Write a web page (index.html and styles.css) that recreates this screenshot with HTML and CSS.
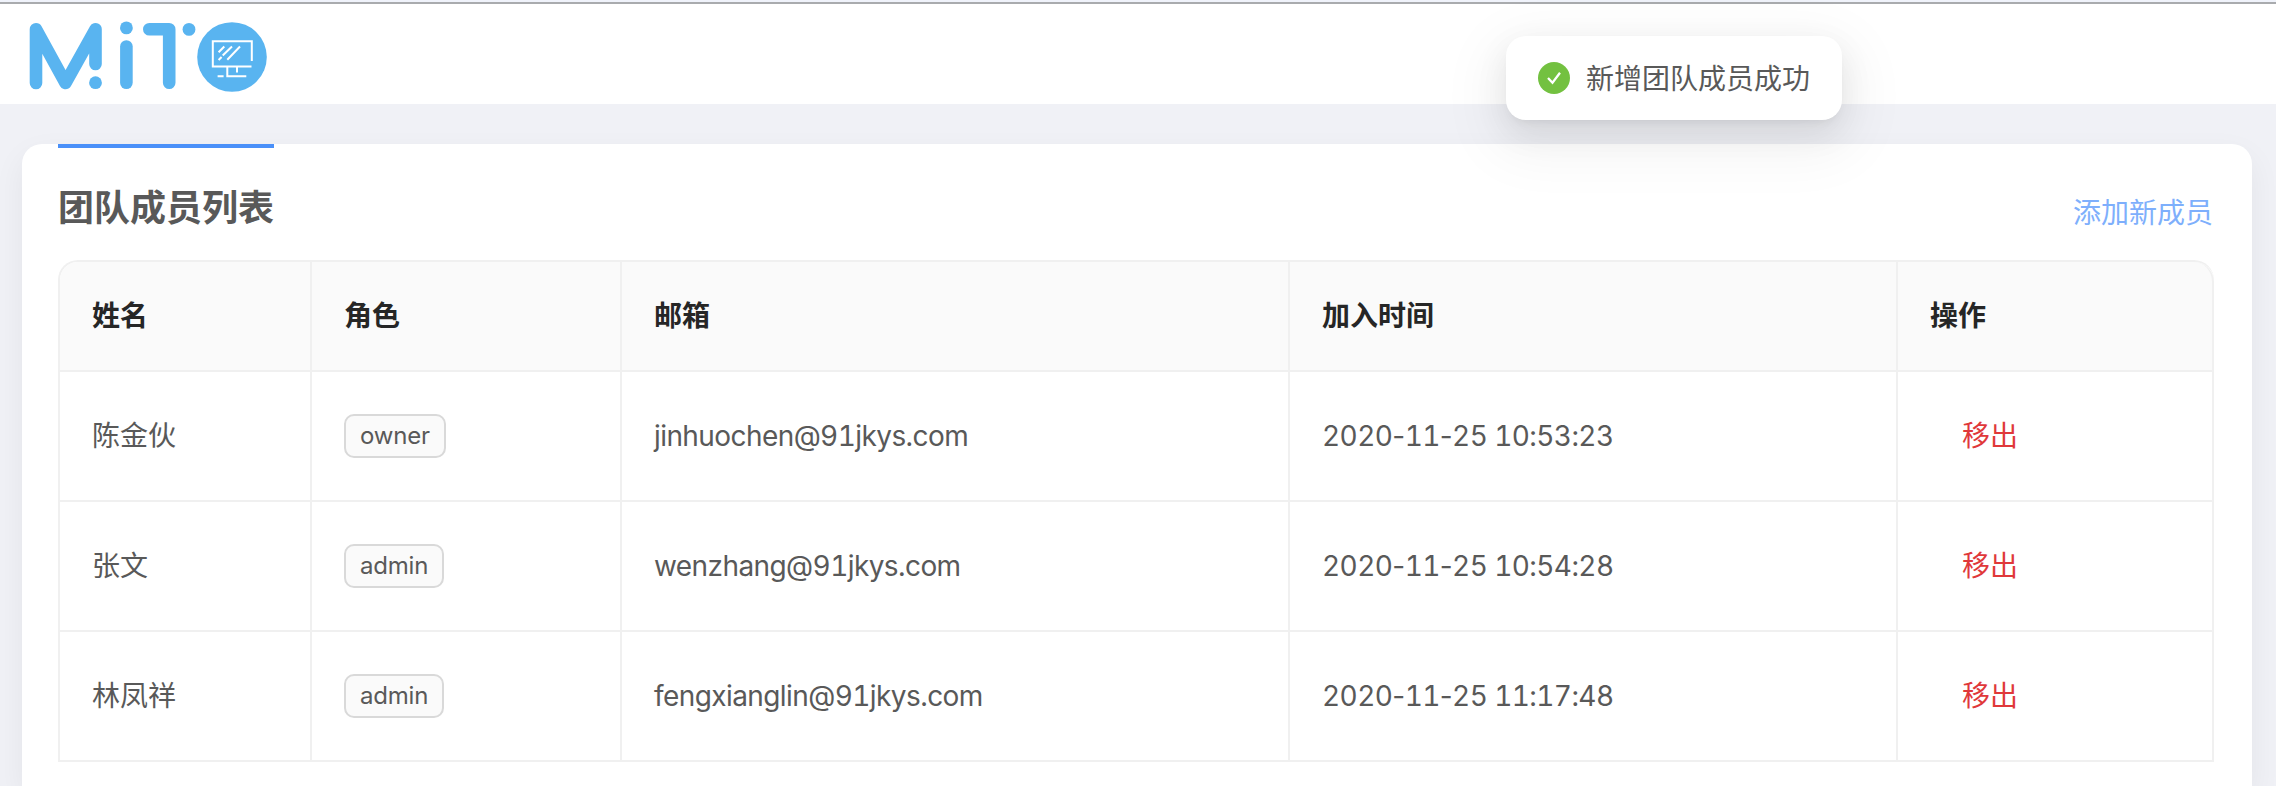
FILE: index.html
```html
<!DOCTYPE html>
<html lang="zh-CN">
<head>
<meta charset="utf-8">
<title>团队成员列表</title>
<link rel="stylesheet" href="styles.css">
</head>
<body>
<header class="header">
  <svg class="logo" width="280" height="100" viewBox="0 4 280 100">
    <g fill="none" stroke="#59b4f0" stroke-width="12.6" stroke-linecap="round" stroke-linejoin="round">
      <path d="M36 83V29.3L65.5 83L95.5 29.3V64"/>
      <path d="M126.4 46.5V82.7"/>
      <path d="M149.3 29.3H169.2V82.7"/>
    </g>
    <g fill="#59b4f0">
      <circle cx="95.5" cy="82.7" r="6.4"/>
      <circle cx="126.4" cy="27.9" r="6.4"/>
      <circle cx="189" cy="29.4" r="6.4"/>
      <circle cx="232" cy="57" r="34.8"/>
    </g>
    <g fill="none" stroke="#fff" stroke-width="2">
      <path d="M251.8 61V41.2H212.8V66.5H251.5"/>
      <path d="M227.3 67V76.2H246.3M237 67V72.5M217.6 76.2H223.6"/>
      <path d="M218.6 52.3L224.3 46.5M222.7 55.5L232 46.5M227.3 59.7L240 46.5M218.6 60L221.6 57"/>
    </g>
  </svg>
</header>
<main class="card">
  <div class="card-head">
    <h1 class="title">团队成员列表</h1>
    <a class="add">添加新成员</a>
  </div>
  <table class="members">
    <colgroup><col class="c-name"><col class="c-role"><col class="c-mail"><col class="c-time"><col class="c-act"></colgroup>
    <thead>
      <tr><th>姓名</th><th>角色</th><th>邮箱</th><th>加入时间</th><th>操作</th></tr>
    </thead>
    <tbody>
      <tr><td>陈金伙</td><td><span class="tag">owner</span></td><td class="latin">jinhuochen@91jkys.com</td><td class="latin">2020<span class="dash">-</span>11<span class="dash">-</span>25 10:53:23</td><td><a class="remove">移出</a></td></tr>
      <tr><td>张文</td><td><span class="tag">admin</span></td><td class="latin">wenzhang@91jkys.com</td><td class="latin">2020<span class="dash">-</span>11<span class="dash">-</span>25 10:54:28</td><td><a class="remove">移出</a></td></tr>
      <tr><td>林凤祥</td><td><span class="tag">admin</span></td><td class="latin">fengxianglin@91jkys.com</td><td class="latin">2020<span class="dash">-</span>11<span class="dash">-</span>25 11:17:48</td><td><a class="remove">移出</a></td></tr>
    </tbody>
  </table>
</main>
<div class="toast">
  <svg width="32" height="32" viewBox="0 0 32 32"><circle cx="16" cy="16" r="16" fill="#73c140"/><path d="M10 16L14.5 20.8L22 10.8" fill="none" stroke="#fff" stroke-width="2.3"/></svg>
  <span class="toast-text">新增团队成员成功</span>
</div>
</body>
</html>
```

FILE: styles.css
```css
* { box-sizing: border-box; }
body {
  margin: 0;
  height: 786px;
  display: flex;
  flex-direction: column;
  overflow: hidden;
  background: #f0f1f6;
  border-top: 2px solid #f0f3fb;
  font: 28px/44px Inter, "Noto Sans CJK SC", sans-serif;
  font-feature-settings: "tnum";
  color: #595959;
}
.header {
  flex: none;
  height: 102px;
  background: #fff;
  border-top: 2px solid #a9abae;
}
.logo { display: block; }
.card {
  flex: 1;
  min-height: 0;
  margin: 40px 24px 0 22px;
  padding: 0 38px 0 36px;
  background: #fff;
  border-radius: 20px 20px 0 0;
  box-shadow: 0 12px 32px rgba(0, 0, 30, .06);
}
.card-head {
  display: flex;
  justify-content: space-between;
  height: 116px;
}
.title {
  margin: 0;
  padding-top: 36px;
  border-top: 4px solid #4a90f9;
  height: 92px;
  font-size: 36px;
  line-height: 48px;
  font-weight: 700;
}
.add {
  padding: 47px 1px 0 0;
  color: #7eaffc;
}
.members {
  width: 2156px;
  table-layout: fixed;
  border-collapse: separate;
  border-spacing: 0;
  border: 2px solid #f0f0f0;
  border-right: 0;
  border-bottom: 0;
  border-radius: 20px 20px 0 0;
}
.c-name { width: 252px; }
.c-role { width: 310px; }
.c-mail { width: 668px; }
.c-time { width: 608px; }
.c-act { width: 316px; }
th, td {
  padding: 0 32px;
  text-align: left;
  border-right: 2px solid #f0f0f0;
  border-bottom: 2px solid #f0f0f0;
}
th {
  height: 110px;
  background: #fafafa;
  color: #262626;
  font-weight: 700;
}
th:first-child { border-top-left-radius: 18px; }
th:last-child { border-top-right-radius: 20px; }
td { height: 130px; }
.latin { letter-spacing: -.58px; }
.dash { font-feature-settings: "tnum" 0; }
.tag {
  display: block;
  width: fit-content;
  height: 44px;
  padding: 0 14px;
  border: 2px solid #d9d9d9;
  border-radius: 10px;
  background: #fafafa;
  font-size: 24px;
  line-height: 40px;
  letter-spacing: -.2px;
}
.remove {
  padding-left: 32px;
  color: #e0383a;
}
.toast {
  position: absolute;
  left: 1506px;
  top: 36px;
  width: 336px;
  height: 84px;
  padding: 0 32px;
  display: flex;
  align-items: center;
  gap: 16px;
  white-space: nowrap;
  background: #fff;
  border-radius: 20px;
  box-shadow: 0 6px 12px -8px rgba(0, 0, 0, .12), 0 12px 32px rgba(0, 0, 0, .08), 0 18px 56px 16px rgba(0, 0, 0, .05);
}
.toast-text { padding-top: 2px; }
```
